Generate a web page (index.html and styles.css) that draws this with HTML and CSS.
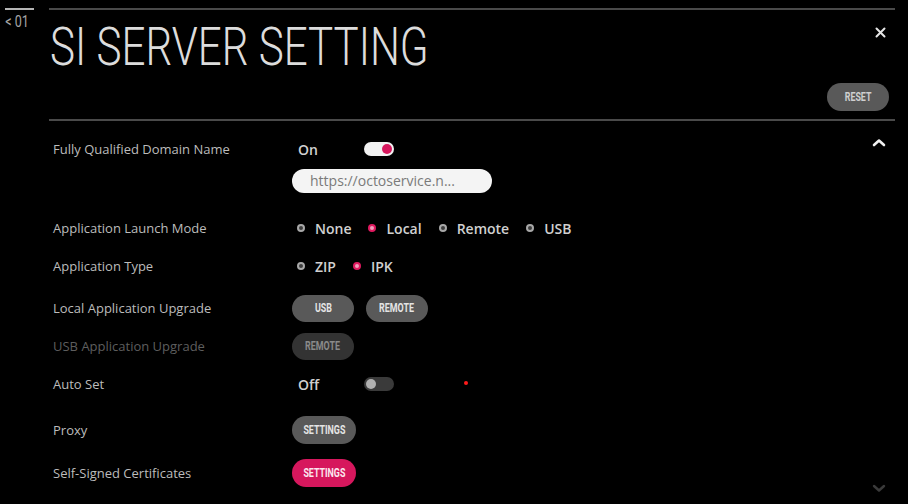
FILE: index.html
```html
<!DOCTYPE html>
<html lang="en">
<head>
<meta charset="utf-8">
<title>SI Server Setting</title>
<link rel="stylesheet" href="styles.css">
</head>
<body>
<div class="screen">
  <nav class="side">
    <div class="side-bar"></div>
    <div class="side-back"><span class="cond">&lt; 01</span></div>
  </nav>
  <main class="panel">
    <header class="head">
      <h1 class="title"><span class="title-text">SI SERVER SETTING</span></h1>
      <button class="close" aria-label="Close">
        <svg width="11" height="11" viewBox="0 0 11 11"><path d="M1.5 1.5 L9.5 9.5 M9.5 1.5 L1.5 9.5" stroke="#e6e6e6" stroke-width="2" stroke-linecap="round"/></svg>
      </button>
      <button class="pill pill-reset"><span class="cond">RESET</span></button>
    </header>
    <section class="list">
      <svg class="scroll scroll-up" width="14" height="9" viewBox="0 0 14 9"><path d="M2 7 L7 2.5 L12 7" fill="none" stroke="#f0f0f0" stroke-width="2.6" stroke-linecap="round" stroke-linejoin="round"/></svg>
      <svg class="scroll scroll-down" width="14" height="9" viewBox="0 0 14 9"><path d="M2 2 L7 6.5 L12 2" fill="none" stroke="#3a3a3a" stroke-width="2.4" stroke-linecap="round" stroke-linejoin="round"/></svg>

      <div class="row row-first">
        <div class="label">Fully Qualified Domain Name</div>
        <div class="value value-stack">
          <div class="line">
            <span class="state">On</span>
            <span class="toggle toggle-on"><span class="knob"></span></span>
          </div>
          <div class="field">https://octoservice.n...</div>
        </div>
      </div>

      <div class="row row-launch">
        <div class="label">Application Launch Mode</div>
        <div class="value radios">
          <span class="radio"><span class="dot"></span>None</span>
          <span class="radio radio-on"><span class="dot"></span>Local</span>
          <span class="radio"><span class="dot"></span>Remote</span>
          <span class="radio"><span class="dot"></span>USB</span>
        </div>
      </div>

      <div class="row">
        <div class="label">Application Type</div>
        <div class="value radios">
          <span class="radio"><span class="dot"></span>ZIP</span>
          <span class="radio radio-on"><span class="dot"></span>IPK</span>
        </div>
      </div>

      <div class="row row-upgrade">
        <div class="label">Local Application Upgrade</div>
        <div class="value buttons">
          <button class="pill"><span class="cond">USB</span></button>
          <button class="pill"><span class="cond">REMOTE</span></button>
        </div>
      </div>

      <div class="row row-disabled">
        <div class="label">USB Application Upgrade</div>
        <div class="value buttons">
          <button class="pill pill-disabled"><span class="cond">REMOTE</span></button>
        </div>
      </div>

      <div class="row">
        <div class="label">Auto Set</div>
        <div class="value line">
          <span class="state">Off</span>
          <span class="toggle toggle-off"><span class="knob"></span></span>
          <span class="marker"></span>
        </div>
      </div>

      <div class="row row-proxy">
        <div class="label">Proxy</div>
        <div class="value buttons">
          <button class="pill pill-wide"><span class="cond">SETTINGS</span></button>
        </div>
      </div>

      <div class="row row-cert">
        <div class="label">Self-Signed Certificates</div>
        <div class="value buttons">
          <button class="pill pill-wide pill-active"><span class="cond">SETTINGS</span></button>
        </div>
      </div>
    </section>
  </main>
</div>
</body>
</html>
```

FILE: styles.css
```css
* { box-sizing: border-box; }

html, body {
  margin: 0;
  padding: 0;
  background: #000;
}

body {
  width: 908px;
  height: 504px;
  overflow: hidden;
  font-family: "Open Sans", "DejaVu Sans", sans-serif;
  color: #bdbdbd;
}

.screen {
  display: flex;
  height: 504px;
}

/* narrow (condensed) text, as in the TV UI font */
.cond {
  display: inline-block;
  transform: scaleX(0.74);
  white-space: nowrap;
}

/* left back nav */
.side {
  width: 49px;
  flex: none;
  padding-top: 8px;
}
.side-bar {
  margin-left: 5px;
  width: 29px;
  height: 2px;
  background: #b5b5b5;
}
.side-back {
  margin: 3px 0 0 1px;
  font-family: Roboto, "Liberation Sans", sans-serif;
  font-weight: 400;
  font-size: 17px;
  line-height: 17px;
  color: #a5a5a5;
}

/* main panel */
.panel {
  width: 846px;
  flex: none;
  padding-top: 8px;
  position: relative;
}

.head {
  border-top: 2px solid #4a4a4a;
  border-bottom: 2px solid #4a4a4a;
  height: 113px;
  display: grid;
  grid-template-columns: 1fr auto;
  grid-template-rows: auto auto;
  padding: 11px 6px 0 1px;
}

.title {
  margin: 0;
  grid-column: 1;
  grid-row: 1 / 3;
  font-family: Roboto, "Liberation Sans", sans-serif;
  font-weight: 300;
  font-size: 54px;
  line-height: 52px;
  color: #dcdcdc;
  white-space: nowrap;
}
.title-text {
  display: inline-block;
  transform: scaleX(0.78);
  transform-origin: left center;
}

.close {
  grid-column: 2;
  grid-row: 1;
  justify-self: end;
  margin: 6px 3px 0 0;
  padding: 0;
  width: 11px;
  height: 11px;
  border: 0;
  background: none;
  display: block;
}
.close svg { display: block; }

.pill {
  border: 0;
  border-radius: 14px;
  height: 27px;
  width: 62px;
  padding: 0;
  background: #595959;
  color: #e4e4e4;
  font-family: Roboto, "Liberation Sans", sans-serif;
  font-weight: 700;
  font-size: 12px;
  display: flex;
  align-items: center;
  justify-content: center;
}

.pill-reset {
  grid-column: 2;
  grid-row: 2;
  align-self: start;
  margin-top: 37px;
  width: 62px;
  height: 28px;
  color: #cfcfcf;
}

.pill-wide { width: 64px; height: 28px; }
.pill-disabled { background: #333; color: #8a8a8a; }
.pill-active { background: #d6175d; color: #fbe6ee; }

/* settings list */
.list {
  position: relative;
  padding: 15px 0 0 4px;
  display: flex;
  flex-direction: column;
  gap: 10px;
  height: 383px;
}

.scroll {
  position: absolute;
  right: 9px;
  display: block;
}
.scroll-up { top: 17px; }
.scroll-down { top: 363px; }

.row {
  display: flex;
  align-items: center;
  min-height: 28px;
}
.row-first { align-items: flex-start; }
.row-launch { margin-top: 11px; }
.row-upgrade { margin-top: 4px; }
.row-proxy { margin-top: 8px; }
.row-cert { margin-top: 5px; }

.label {
  width: 239px;
  flex: none;
  font-size: 13px;
  line-height: 26px;
  color: #bcbcbc;
  white-space: nowrap;
}
.row-disabled .label { color: #5e5e5e; }

.value {
  display: flex;
  align-items: center;
}
.value-stack {
  flex-direction: column;
  align-items: flex-start;
}

.line {
  display: flex;
  align-items: center;
  height: 26px;
}

.state {
  width: 72px;
  padding-left: 6px;
  font-size: 14px;
  font-weight: 600;
  color: #d0d0d0;
}

.toggle {
  width: 30px;
  height: 14px;
  border-radius: 7px;
  display: flex;
  align-items: center;
  padding: 0 2px;
}
.toggle .knob {
  width: 10px;
  height: 10px;
  border-radius: 50%;
}
.toggle-on { background: #f2f2f2; justify-content: flex-end; }
.toggle-on .knob { background: #d6175d; }
.toggle-off { background: #3a3a3a; justify-content: flex-start; }
.toggle-off .knob { background: #b0b0b0; }

.marker {
  width: 4px;
  height: 4px;
  border-radius: 50%;
  background: #ff1a1a;
  margin: -2px 0 0 70px;
}

.field {
  margin-top: 7px;
  width: 200px;
  height: 24px;
  border-radius: 12px;
  background: #f4f4f4;
  color: #7a7a7a;
  font-size: 14px;
  line-height: 24px;
  padding-left: 18px;
  white-space: nowrap;
}

.radios {
  gap: 17px;
  padding-left: 5px;
}
.radio {
  display: flex;
  align-items: center;
  gap: 10px;
  font-size: 14px;
  font-weight: 600;
  color: #d0d0d0;
}
.dot {
  width: 8px;
  height: 8px;
  border-radius: 50%;
  border: 2px solid #a8a8a8;
  background: #3c3c3c;
}
.radio-on .dot {
  border-color: #e0195f;
  background: #f0a0bc;
}

.buttons {
  gap: 12px;
}
```
